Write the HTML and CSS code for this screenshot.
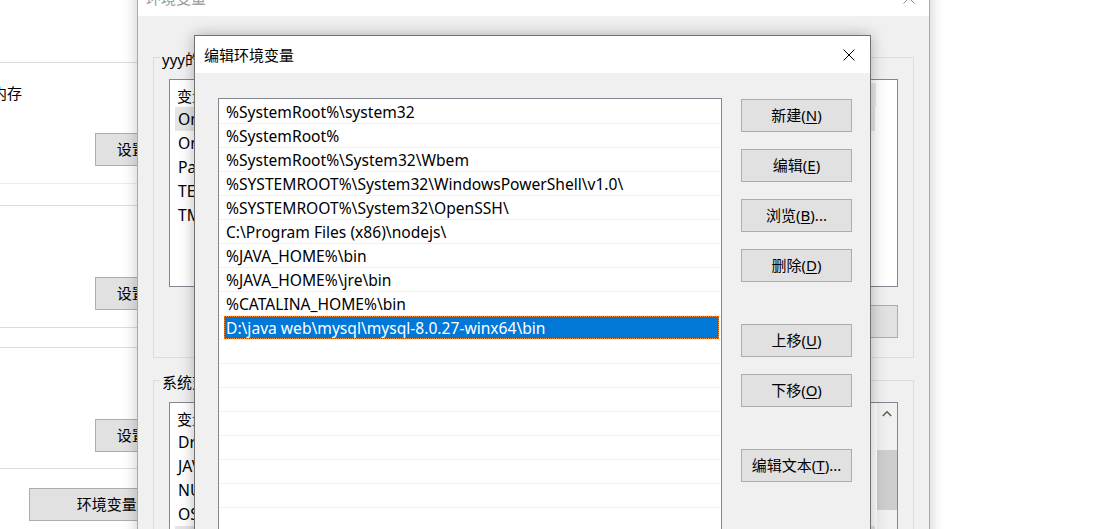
FILE: index.html
```html
<!DOCTYPE html>
<html lang="zh-CN">
<head>
<meta charset="utf-8">
<title>编辑环境变量</title>
<link rel="stylesheet" href="styles.css">
</head>
<body>
<div class="desktop">

  <section class="win win-sys">
    <div class="sys-group g1">
      <p class="sys-text">视觉效果，处理器计划，内存使用，以及虚拟内存</p>
      <button class="btn sys-btn" type="button">设置(<u>S</u>)...</button>
    </div>
    <div class="sys-group g2">
      <button class="btn sys-btn" type="button">设置(<u>E</u>)...</button>
    </div>
    <div class="sys-group g3">
      <button class="btn sys-btn" type="button">设置(<u>T</u>)...</button>
    </div>
    <button class="btn env-btn" type="button">环境变量(<u>N</u>)...</button>
  </section>

  <section class="win win-env">
    <header class="titlebar">
      <span class="title">环境变量</span>
      <svg class="close" width="12" height="12" viewBox="0 0 12 12"><path d="M0.5 0.5L11.5 11.5M11.5 0.5L0.5 11.5" stroke="#8a8a8a" stroke-width="1" fill="none"/></svg>
    </header>
    <div class="env-body">
      <div class="group group-user">
        <span class="group-label">yyy的用户变量(<u>U</u>)</span>
        <div class="listbox user-list">
          <div class="list-header"><span class="col-name">变量</span><span class="col-value">值</span><span class="hdr-end"></span></div>
          <div class="var-row sel"><span class="col-name">OneDrive</span><span class="col-value">C:\Users\yyy\OneDrive</span></div>
          <div class="var-row"><span class="col-name">OneDriveConsumer</span><span class="col-value">C:\Users\yyy\OneDrive</span></div>
          <div class="var-row"><span class="col-name">Path</span><span class="col-value">C:\Users\yyy\AppData\Local\Microsoft\WindowsApps</span></div>
          <div class="var-row"><span class="col-name">TEMP</span><span class="col-value">C:\Users\yyy\AppData\Local\Temp</span></div>
          <div class="var-row"><span class="col-name">TMP</span><span class="col-value">C:\Users\yyy\AppData\Local\Temp</span></div>
        </div>
        <div class="env-actions">
          <button class="btn" type="button">新建(<u>N</u>)...</button>
          <button class="btn" type="button">编辑(<u>E</u>)...</button>
          <button class="btn" type="button">删除(<u>D</u>)</button>
        </div>
      </div>
      <div class="group group-sys">
        <span class="group-label">系统变量(<u>S</u>)</span>
        <div class="listbox sys-list">
          <div class="list-main">
            <div class="list-header"><span class="col-name">变量</span><span class="col-value">值</span></div>
            <div class="var-row"><span class="col-name">DriverData</span><span class="col-value">C:\Windows\System32\Drivers\DriverData</span></div>
            <div class="var-row"><span class="col-name">JAVA_HOME</span><span class="col-value">D:\java\jdk1.8.0</span></div>
            <div class="var-row"><span class="col-name">NUMBER_OF_PROCESSORS</span><span class="col-value">8</span></div>
            <div class="var-row"><span class="col-name">OS</span><span class="col-value">Windows_NT</span></div>
            <div class="var-row sel"><span class="col-name">Path</span><span class="col-value">C:\Windows\system32</span></div>
          </div>
          <div class="scrollbar">
            <div class="sb-up"><svg width="10" height="7" viewBox="0 0 10 7"><path d="M0.8 6L5 1.8L9.2 6" stroke="#606060" stroke-width="1.6" fill="none"/></svg></div>
            <div class="sb-thumb"></div>
          </div>
        </div>
      </div>
    </div>
  </section>

  <section class="win win-edit">
    <header class="titlebar">
      <span class="title">编辑环境变量</span>
      <svg class="close" width="12" height="12" viewBox="0 0 12 12"><path d="M0.5 0.5L11.5 11.5M11.5 0.5L0.5 11.5" stroke="#000" stroke-width="1" fill="none"/></svg>
    </header>
    <div class="edit-body">
      <ul class="path-list">
        <li class="path-row"><span class="path-text">%SystemRoot%\system32</span></li>
        <li class="path-row"><span class="path-text">%SystemRoot%</span></li>
        <li class="path-row"><span class="path-text">%SystemRoot%\System32\Wbem</span></li>
        <li class="path-row"><span class="path-text">%SYSTEMROOT%\System32\WindowsPowerShell\v1.0\</span></li>
        <li class="path-row"><span class="path-text">%SYSTEMROOT%\System32\OpenSSH\</span></li>
        <li class="path-row"><span class="path-text">C:\Program Files (x86)\nodejs\</span></li>
        <li class="path-row"><span class="path-text">%JAVA_HOME%\bin</span></li>
        <li class="path-row"><span class="path-text">%JAVA_HOME%\jre\bin</span></li>
        <li class="path-row"><span class="path-text">%CATALINA_HOME%\bin</span></li>
        <li class="path-row sel"><span class="path-text">D:\java web\mysql\mysql-8.0.27-winx64\bin</span></li>
        <li class="path-row"><span class="path-text"></span></li>
        <li class="path-row"><span class="path-text"></span></li>
        <li class="path-row"><span class="path-text"></span></li>
        <li class="path-row"><span class="path-text"></span></li>
        <li class="path-row"><span class="path-text"></span></li>
        <li class="path-row"><span class="path-text"></span></li>
        <li class="path-row"><span class="path-text"></span></li>
        <li class="path-row"><span class="path-text"></span></li>
      </ul>
      <div class="edit-actions">
        <button class="btn" type="button">新建(<u>N</u>)</button>
        <button class="btn" type="button">编辑(<u>E</u>)</button>
        <button class="btn" type="button">浏览(<u>B</u>)...</button>
        <button class="btn" type="button">删除(<u>D</u>)</button>
        <button class="btn gap" type="button">上移(<u>U</u>)</button>
        <button class="btn" type="button">下移(<u>O</u>)</button>
        <button class="btn gap" type="button">编辑文本(<u>T</u>)...</button>
      </div>
    </div>
  </section>

</div>
</body>
</html>
```

FILE: styles.css
```css
* { box-sizing: border-box; }

html, body {
  margin: 0;
  padding: 0;
}

body {
  width: 1095px;
  height: 529px;
  overflow: hidden;
  background: #fff;
  font-family: "Noto Sans", "Noto Sans CJK SC", sans-serif;
  font-size: 15px;
  color: #000;
}

.desktop {
  position: relative;
  width: 1095px;
  height: 529px;
  overflow: hidden;
}

.win { position: absolute; }

u { text-underline-offset: 2px; text-decoration-thickness: 1px; }

/* generic win32 button */
.btn {
  display: flex;
  align-items: center;
  justify-content: center;
  height: 33px;
  padding: 0 0 2px;
  background: #e1e1e1;
  border: 1px solid #adadad;
  font: inherit;
  font-size: 15px;
  line-height: 20px;
  color: #000;
  white-space: nowrap;
}

/* ---------- background: system properties ---------- */
.win-sys {
  left: 0;
  top: 0;
  width: 220px;
  height: 529px;
  padding-top: 62px;
  z-index: 1;
}

.sys-group {
  border-top: 1px solid #dcdcdc;
  border-bottom: 1px solid #dcdcdc;
}

.g1 { height: 122px; border-bottom-color: #ececec; }
.g2 { height: 123px; margin-top: 21px; padding-top: 71px; }
.g3 { height: 122px; margin-top: 19px; padding-top: 71px; }

.sys-text {
  margin: 20px 0 0 -308px;
  line-height: 20px;
  white-space: nowrap;
}

.g1 .sys-btn { margin-top: 30px; }

.sys-btn { margin-left: 95px; width: 103px; }

.env-btn { margin: 19px 0 0 29px; width: 188px; }

/* ---------- middle: environment variables ---------- */
.win-env {
  left: 137px;
  top: -22px;
  width: 793px;
  height: 580px;
  border: 1px solid #aaa;
  background: #f0f0f0;
  box-shadow: 0 0 14px rgba(0, 0, 0, 0.22);
  z-index: 2;
}

.titlebar {
  display: flex;
  align-items: center;
  justify-content: space-between;
  background: #fff;
}

.title { line-height: 20px; }

.win-env .titlebar {
  height: 37px;
  padding: 0 14px 0 8px;
  color: #999;
}

.env-body { padding: 0 15px; }

.group {
  border: 1px solid #dcdcdc;
  padding: 0 15px;
}

.group-user { margin-top: 41px; padding-bottom: 19px; }
.group-sys { margin-top: 22px; height: 300px; }

.group-label {
  display: block;
  width: max-content;
  margin: -9px 0 0 -9px;
  padding: 0 2px;
  background: #f0f0f0;
  line-height: 20px;
  white-space: nowrap;
}

.listbox {
  margin-top: 10px;
  background: #fff;
  border: 1px solid #828790;
  overflow: hidden;
}

.user-list { height: 208px; }

.list-header {
  display: flex;
  height: 27px;
  padding: 3px 0 0 7px;
  align-items: center;
  font-size: 15px;
}

.hdr-end {
  width: 5px;
  height: 100%;
  margin-left: auto;
  margin-right: 21px;
  background: #e9e9e9;
}

.var-row {
  display: flex;
  align-items: center;
  width: 700px;
  height: 24px;
  margin-left: 5px;
  padding-left: 3px;
  font-size: 15.7px;
  white-space: nowrap;
}

.var-row.sel { background: #e5e5e5; }

.col-name { width: 260px; flex: none; }
.col-value { flex: 1; }

.env-actions {
  display: flex;
  justify-content: flex-end;
  gap: 10px;
  margin-top: 18px;
}

.env-actions .btn { width: 111px; }

.sys-list {
  display: flex;
  height: 260px;
}

.list-main { flex: 1; min-width: 0; }

.scrollbar {
  width: 20px;
  flex: none;
  background: #f0f0f0;
  display: flex;
  flex-direction: column;
}

.sb-up {
  height: 20px;
  display: flex;
  align-items: center;
  justify-content: center;
}

.sb-thumb {
  margin-top: 27px;
  height: 60px;
  background: #cdcdcd;
}

/* ---------- front: edit environment variable ---------- */
.win-edit {
  left: 194px;
  top: 35px;
  width: 677px;
  height: 560px;
  border: 1px solid #707070;
  background: #f0f0f0;
  box-shadow: 0 0 14px rgba(0, 0, 0, 0.28);
  z-index: 3;
}

.win-edit .titlebar {
  height: 37px;
  padding: 0 15px 0 9px;
}

.edit-body {
  display: flex;
  gap: 19px;
  padding: 25px 0 0 23px;
}

.path-list {
  list-style: none;
  margin: 0;
  width: 504px;
  height: 480px;
  padding: 1px 1px 0 0;
  background: #fff;
  border: 1px solid #828790;
  overflow: hidden;
}

.path-row {
  height: 24px;
  border-bottom: 1px solid #efefef;
}

.path-text {
  display: block;
  height: 23px;
  line-height: 24px;
  margin: 0 1px 0 5px;
  padding-left: 2px;
  font-size: 15.6px;
  white-space: nowrap;
}

.path-row.sel .path-text {
  background: #0078d7;
  color: #fff;
  outline: 1px dotted #ff8728;
  outline-offset: -1px;
}

.edit-actions {
  display: flex;
  flex-direction: column;
  width: 111px;
  padding-top: 1px;
}

.edit-actions .btn + .btn { margin-top: 17px; }
.edit-actions .btn.gap { margin-top: 42px; }
```
